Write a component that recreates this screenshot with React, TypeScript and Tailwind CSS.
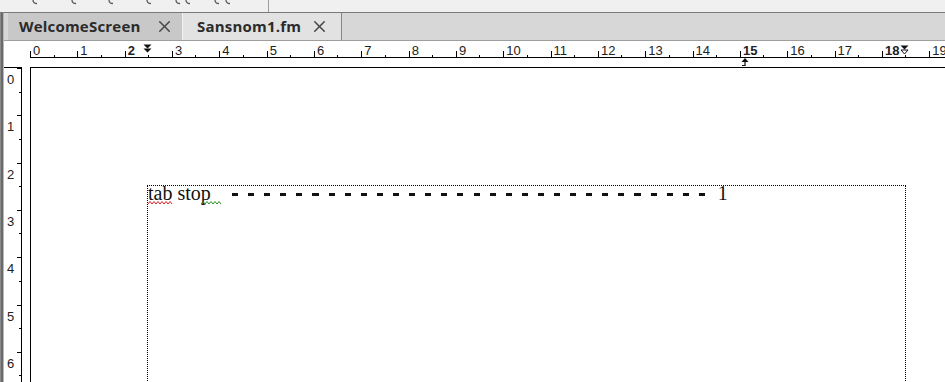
import { X } from 'lucide-react'

const serif = "font-['Liberation_Serif','Times_New_Roman',serif]"
const sans = "font-['Liberation_Sans',Arial,sans-serif]"

const hNumbers = Array.from({ length: 20 }, (_, i) => i)
const vNumbers = [0, 1, 2, 3, 4, 5, 6]
const boldNumbers = [2, 15, 18]

function ToolbarRemnant() {
  const marks = [33, 72, 109, 147, 176, 186, 215, 226]
  return (
    <div className="flex h-[13px] border-b border-[#7a7a7a] bg-[#f0f0f0]">
      <svg width="268" height="12" className="shrink-0">
        {marks.map((x) => (
          <path key={x} d={`M${x} 0 q0 3.5 4 3.5`} stroke="#5a5a5a" strokeWidth="1.3" fill="none" />
        ))}
      </svg>
      <div className="h-full w-px bg-[#9c9c9c]" />
    </div>
  )
}

function Tab({ label, className }: { label: string; className: string }) {
  return (
    <div className={`flex h-full items-center justify-between ${className}`}>
      <span className="font-['Open_Sans',sans-serif] text-[15px] font-bold tracking-[0.2px] text-[#2b2b2b]">
        {label}
      </span>
      <X size={19} strokeWidth={2} className="text-[#4a4a4a]" />
    </div>
  )
}

function TabBar() {
  return (
    <div className="flex h-[28px] border-b border-[#9e9e9e] bg-[#d7d7d7] pl-[4px]">
      <Tab label="WelcomeScreen" className="w-[174px] bg-[#c8c8c8] pl-[11px] pr-[8px]" />
      <Tab
        label="Sansnom1.fm"
        className="w-[160px] border-l border-r border-l-[#f2f2f2] border-r-[#858585] bg-[#e2e2e2] pl-[14px] pr-[12px]"
      />
    </div>
  )
}

function HorizontalRuler() {
  return (
    <div className="flex h-[26px] bg-white">
      <div className="w-[26px] shrink-0" />
      <div className="relative flex-1 overflow-hidden">
        <div className="flex h-[17px] border-b border-black">
          {hNumbers.map((n) => (
            <div key={n} className="relative h-[16px] w-[47.33px] shrink-0">
              <span
                className={`block pl-[3px] pt-[3px] text-[13px] leading-[13px] text-[#222] ${sans} ${
                  boldNumbers.includes(n) ? 'font-bold' : ''
                }`}
              >
                {n}
              </span>
              <div className="absolute bottom-0 left-0 h-[6px] w-px bg-black" />
              <div className="absolute bottom-0 left-[23.5px] h-[2px] w-px bg-black" />
            </div>
          ))}
        </div>
        {/* indent markers */}
        <svg width="10" height="10" className="absolute left-[113px] top-[3px]">
          <polygon points="0.5,0.5 8.5,0.5 4.5,4.5" fill="#111" />
          <polygon points="0.5,4.5 8.5,4.5 4.5,8.5" fill="#111" />
        </svg>
        <svg width="10" height="11" className="absolute left-[870px] top-[4px]">
          <polygon points="0.5,0.5 8.5,0.5 4.5,4.5" fill="#111" />
          <polygon points="1,5 8,5 4.5,9" fill="white" stroke="#111" strokeWidth="1" />
        </svg>
        {/* left tab stop */}
        <svg width="10" height="8" className="absolute left-[710px] top-[17px]">
          <polygon points="1.5,4 8.5,4 5,0" fill="#111" />
          <line x1="5" y1="4" x2="5" y2="7.5" stroke="#111" strokeWidth="1.2" />
          <line x1="2" y1="7.5" x2="5.5" y2="7.5" stroke="#111" strokeWidth="1" />
        </svg>
      </div>
    </div>
  )
}

function VerticalRuler() {
  return (
    <div className="w-[18px] shrink-0 border-r border-t border-black bg-white">
      {vNumbers.map((n) => (
        <div key={n} className="relative h-[47.33px]">
          <span className={`block pl-[3px] pt-[5px] text-[13px] leading-[13px] text-[#222] ${sans}`}>{n}</span>
          <div className="absolute right-0 top-0 h-px w-[4px] bg-black" />
          <div className="absolute right-0 top-[23.5px] h-px w-[2px] bg-black" />
        </div>
      ))}
    </div>
  )
}

function Squiggle({ color, width }: { color: string; width: number }) {
  const pts: string[] = []
  for (let x = 0; x <= width; x += 2) pts.push(`${x},${(x / 2) % 2 === 0 ? 3 : 0.5}`)
  return (
    <svg width={width} height="4">
      <polyline points={pts.join(' ')} fill="none" stroke={color} strokeWidth="1" />
    </svg>
  )
}

function TextFrame() {
  return (
    <div className="h-[260px] w-[759px] border border-b-0 border-dotted border-black">
      <div className={`flex items-start text-[20px] leading-[14px] text-[#111] ${serif}`}>
        <span className="relative whitespace-pre">
          tab stop
          <span className="absolute left-0 top-[15px] flex">
            <Squiggle color="#d22" width={25} />
          </span>
          <span className="absolute left-[53px] top-[15px] flex">
            <Squiggle color="#2a8a2a" width={21} />
          </span>
        </span>
        <div className="ml-[21px] mt-[7px] h-[2.5px] w-[473px] shrink-0 bg-[repeating-linear-gradient(90deg,#111_0_6px,transparent_6px_16.1px)]" />
        <span className="ml-[13px]">1</span>
      </div>
    </div>
  )
}

export default function App() {
  return (
    <div className="flex h-[382px] w-[945px] flex-col overflow-hidden bg-white">
      <ToolbarRemnant />
      <div className="flex min-h-0 flex-1">
        <div className="w-[4px] shrink-0 border-l border-r border-l-[#8a8a8a] border-r-[#b8b8b8] bg-[#6a6a6a]" />
        <div className="flex min-w-0 flex-1 flex-col">
          <TabBar />
          <HorizontalRuler />
          <div className="flex min-h-0 flex-1">
            <VerticalRuler />
            <div className="ml-[8px] flex-1 border-l border-t border-black bg-white pl-[116px] pt-[117px]">
              <TextFrame />
            </div>
          </div>
        </div>
      </div>
    </div>
  )
}
